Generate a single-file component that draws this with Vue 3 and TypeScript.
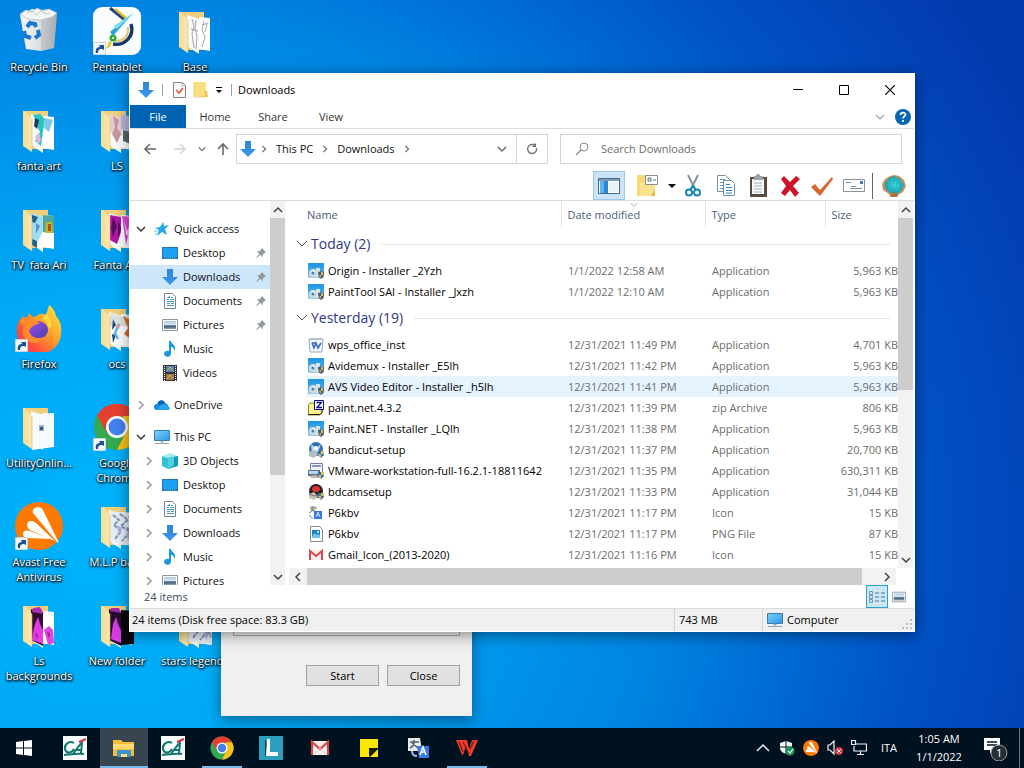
<script setup lang="ts">
import { ref } from 'vue'

interface DesktopItem { label: string; icon: string; art?: string; shortcut?: boolean }
interface NavItem { label: string; icon: string; pinned?: boolean; active?: boolean; expandable?: boolean }
interface NavSection { label: string; icon: string; open: boolean; items: NavItem[] }
interface FileItem { name: string; icon: string; date: string; type: string; size: string; hover?: boolean }
interface FileGroup { label: string; files: FileItem[] }
interface TaskItem { label: string; icon: string; state?: string }

const desktopColumns: DesktopItem[][] = [
  [
    { label: 'Recycle Bin', icon: 'bin' },
    { label: 'fanta art', icon: 'folder', art: 'art-teal' },
    { label: 'TV  fata Ari', icon: 'folder', art: 'art-tv' },
    { label: 'Firefox', icon: 'firefox', shortcut: true },
    { label: 'UtilityOnlin...', icon: 'folder', art: 'art-blank' },
    { label: 'Avast Free Antivirus', icon: 'avast', shortcut: true },
    { label: 'Ls backgrounds', icon: 'folder', art: 'art-magenta' },
  ],
  [
    { label: 'Pentablet', icon: 'pen', shortcut: true },
    { label: 'LS', icon: 'folder', art: 'art-ls' },
    { label: 'Fanta Art', icon: 'folder', art: 'art-pink' },
    { label: 'ocs', icon: 'folder', art: 'art-ocs' },
    { label: 'Google Chrome', icon: 'chrome', shortcut: true },
    { label: 'M.L.P base', icon: 'folder', art: 'art-mlp' },
    { label: 'New folder', icon: 'folder', art: 'art-dark' },
  ],
  [
    { label: 'Base', icon: 'folder', art: 'art-base' },
    { label: 'stars legends', icon: 'folder', art: 'art-mlp' },
  ],
]

const sections: NavSection[] = [
  {
    label: 'Quick access', icon: 'star', open: true, items: [
      { label: 'Desktop', icon: 'desktop', pinned: true },
      { label: 'Downloads', icon: 'down', pinned: true, active: true },
      { label: 'Documents', icon: 'doc', pinned: true },
      { label: 'Pictures', icon: 'picture', pinned: true },
      { label: 'Music', icon: 'music' },
      { label: 'Videos', icon: 'video' },
    ],
  },
  { label: 'OneDrive', icon: 'cloud', open: false, items: [] },
  {
    label: 'This PC', icon: 'pc', open: true, items: [
      { label: '3D Objects', icon: 'cube', expandable: true },
      { label: 'Desktop', icon: 'desktop', expandable: true },
      { label: 'Documents', icon: 'doc', expandable: true },
      { label: 'Downloads', icon: 'down', expandable: true },
      { label: 'Music', icon: 'music', expandable: true },
      { label: 'Pictures', icon: 'picture', expandable: true },
    ],
  },
]

const groups: FileGroup[] = [
  {
    label: 'Today (2)', files: [
      { name: 'Origin - Installer _2Yzh', icon: 'installer', date: '1/1/2022 12:58 AM', type: 'Application', size: '5,963 KB' },
      { name: 'PaintTool SAI - Installer _Jxzh', icon: 'installer', date: '1/1/2022 12:10 AM', type: 'Application', size: '5,963 KB' },
    ],
  },
  {
    label: 'Yesterday (19)', files: [
      { name: 'wps_office_inst', icon: 'wpsdoc', date: '12/31/2021 11:49 PM', type: 'Application', size: '4,701 KB' },
      { name: 'Avidemux - Installer _E5lh', icon: 'installer', date: '12/31/2021 11:42 PM', type: 'Application', size: '5,963 KB' },
      { name: 'AVS Video Editor - Installer _h5lh', icon: 'installer', date: '12/31/2021 11:41 PM', type: 'Application', size: '5,963 KB', hover: true },
      { name: 'paint.net.4.3.2', icon: 'zip', date: '12/31/2021 11:39 PM', type: 'zip Archive', size: '806 KB' },
      { name: 'Paint.NET - Installer _LQlh', icon: 'installer', date: '12/31/2021 11:38 PM', type: 'Application', size: '5,963 KB' },
      { name: 'bandicut-setup', icon: 'bandicut', date: '12/31/2021 11:37 PM', type: 'Application', size: '20,700 KB' },
      { name: 'VMware-workstation-full-16.2.1-18811642', icon: 'vmware', date: '12/31/2021 11:35 PM', type: 'Application', size: '630,311 KB' },
      { name: 'bdcamsetup', icon: 'bdcam', date: '12/31/2021 11:33 PM', type: 'Application', size: '31,044 KB' },
      { name: 'P6kbv', icon: 'translate-small', date: '12/31/2021 11:17 PM', type: 'Icon', size: '15 KB' },
      { name: 'P6kbv', icon: 'png', date: '12/31/2021 11:17 PM', type: 'PNG File', size: '87 KB' },
      { name: 'Gmail_Icon_(2013-2020)', icon: 'gmail-small', date: '12/31/2021 11:16 PM', type: 'Icon', size: '15 KB' },
    ],
  },
]

const tools = [
  { label: 'Copy', icon: 'copy' },
  { label: 'Paste', icon: 'paste' },
  { label: 'Delete', icon: 'cross' },
  { label: 'Properties', icon: 'check' },
  { label: 'Send', icon: 'mail' },
]

const tasks: TaskItem[] = [
  { label: 'CA', icon: 'ca' },
  { label: 'File Explorer', icon: 'explorer', state: 'active' },
  { label: 'CA', icon: 'ca' },
  { label: 'Google Chrome', icon: 'chrome', state: 'running' },
  { label: 'L', icon: 'letter' },
  { label: 'Gmail', icon: 'gmail' },
  { label: 'Sticky Notes', icon: 'note' },
  { label: 'Translate', icon: 'translate' },
  { label: 'WPS Office', icon: 'wps', state: 'running' },
]

const tray = [
  { label: 'Show hidden icons', icon: 'caret' },
  { label: 'Security', icon: 'shield' },
  { label: 'Avast', icon: 'avast' },
  { label: 'Volume', icon: 'sound' },
  { label: 'Network', icon: 'network' },
]

const query = ref('')
</script>

<template>
  <div class="screen">
    <svg class="sprite" aria-hidden="true">
      <defs>
        <linearGradient id="g-bin" x1="0" x2="1" y1="0" y2="0"><stop offset="0" stop-color="#f4f5f6" /><stop offset=".65" stop-color="#d8dbde" /><stop offset="1" stop-color="#a3a8ad" /></linearGradient>
        <linearGradient id="g-fold" x1="0" x2="1" y1="0" y2="0"><stop offset="0" stop-color="#f6dc92" /><stop offset="1" stop-color="#fbe9b4" /></linearGradient>
        <linearGradient id="g-fox" x1="1" x2="0" y1="0" y2="1"><stop offset="0" stop-color="#fff04a" /><stop offset=".4" stop-color="#ffa329" /><stop offset=".75" stop-color="#ff4a3f" /><stop offset="1" stop-color="#e22b7c" /></linearGradient>
        <linearGradient id="g-violet" x1="0" x2="1" y1="0" y2="1"><stop offset="0" stop-color="#9a50e8" /><stop offset="1" stop-color="#4a3fb5" /></linearGradient>
        <linearGradient id="g-arrow" x1="0" x2="0" y1="0" y2="1"><stop offset="0" stop-color="#2f86d6" /><stop offset="1" stop-color="#3b97ea" /></linearGradient>
        <linearGradient id="g-scene" x1="0" x2="0" y1="0" y2="1"><stop offset="0" stop-color="#a9cbe4" /><stop offset=".5" stop-color="#dfeaf2" /><stop offset=".6" stop-color="#35536e" /><stop offset="1" stop-color="#8fa5b8" /></linearGradient>
        <linearGradient id="g-screen" x1="0" x2="1" y1="0" y2="1"><stop offset="0" stop-color="#7cd0fb" /><stop offset="1" stop-color="#2b98e6" /></linearGradient>
        <linearGradient id="g-sky" x1="0" x2="0" y1="0" y2="1"><stop offset="0" stop-color="#1d97e4" /><stop offset=".5" stop-color="#3fa6e0" /><stop offset="1" stop-color="#a9cfe4" /></linearGradient>
        <radialGradient id="g-shell"><stop offset="0" stop-color="#3fe0e6" /><stop offset="1" stop-color="#1c9fae" /></radialGradient>
      </defs>

      <symbol id="i-bin" viewBox="0 0 48 48">
        <path d="M5 8 17 2l9 1 8-1 8 5-3 34-13 3-15-2z" fill="url(#g-bin)" />
        <path d="M26 11 42 7l-3 34-13 3z" fill="#a9afb5" opacity=".5" />
        <path d="m5 7 6-4 6 2 5-4 6 3 6-2 8 4-5 4-11 3-13-1z" fill="#f3f4f5" stroke="#b4b9bd" stroke-width=".7" />
        <path d="m12 6 5-2 4 4 5-4 5 3 4-1" fill="none" stroke="#c6cacd" />
        <path d="m12 20 3-4 5 1 1 3M23 23l1 5-4 3M16 31l-6-2-1-5" fill="none" stroke="#1679cf" stroke-width="4" />
      </symbol>
      <symbol id="i-folder" viewBox="0 0 48 48">
        <path d="M8 5h25v38H16z" fill="#efcf7e" />
        <path d="m28 10 11 1v33l-11-2z" fill="#fff" /><path d="m16 8 12 4v35l-12-8z" fill="#f8fafc" />
      </symbol>
      <symbol id="i-flap" viewBox="0 0 48 48"><path d="M8 5h2l7 8v33L8 40z" fill="url(#g-fold)" /><path d="M17 13v33" stroke="#d9b45e" stroke-width=".6" /></symbol>
      <symbol id="i-art-teal" viewBox="0 0 48 48">
        <path d="m18 9 7-1 5 5-2 12-2 15-6-5 5-9-3-6-1-6z" fill="#27c4c2" /><path d="m20 12 4 2-2 9-3-3z" fill="#203a55" /><path d="m30 12 8 2-4 12-5-4z" fill="#7fc7e8" /><path d="m20 31 4-5 2 8-3 5z" fill="#e8b8d4" />
      </symbol>
      <symbol id="i-art-tv" viewBox="0 0 48 48">
        <path d="m16 8 12 4v14l-5 10-7 4z" fill="#9fdcf4" /><path d="m28 10 11 1v17l-11-1z" fill="#4fa6a1" /><path d="M31 17h6l1 11h-8z" fill="#c9b32b" /><path d="M33 19h3v7h-3z" fill="#b44c24" /><path d="m17 10 6 2-3 6-3-1zM17 34l5 2v7l-5-3z" fill="#1c6091" /><path d="m21 18 4 3-4 8z" fill="#5b8fd4" />
      </symbol>
      <symbol id="i-art-blank" viewBox="0 0 48 48">
        <path d="m15 12 24-2v34l-22 3z" fill="#f7fafd" /><path d="M24 22h5v6h-5z" fill="#9fb2c4" /><path d="M25 24h3v3h-3z" fill="#2c5e8d" />
      </symbol>
      <symbol id="i-art-magenta" viewBox="0 0 48 48">
        <path d="m16 8 12 3v34l-12-6z" fill="#300c37" /><path d="m18 7 7-1 4 7-12-2z" fill="#ad2eb3" /><path d="m20 23 3-7 2 7 3 6 0 14-11-4 1-8z" fill="#e03be4" /><path d="m29 29 5-4 4 4 1 13-6 2-2-8z" fill="#df46df" /><path d="m32 31 3 1-1 6zM20 31l3 3-1 5z" fill="#a018a4" />
      </symbol>
      <symbol id="i-art-dark" viewBox="0 0 48 48">
        <path d="m28 9 13 1v33l-13 1z" fill="#09060d" /><path d="m16 8 12 3v34l-12-6z" fill="#250a31" /><path d="m18 7 8 0 2 5-11-2z" fill="#a02bab" /><path d="m20 23 3-7 2 7 3 6 0 13-10-4 1-8z" fill="#d83ce0" />
      </symbol>
      <symbol id="i-art-ls" viewBox="0 0 48 48">
        <path d="m16 8 13 4 0 18-13-4z" fill="#e6cfd2" /><path d="m20 10 6 4-2 8 4 6-4 9-5-9 3-7z" fill="#c7969c" /><path d="m28 9 18 2v17l-18-5z" fill="#b9b7dc" /><path d="m30 24 16 4v13l-16-6z" fill="#5b646b" />
      </symbol>
      <symbol id="i-art-pink" viewBox="0 0 48 48">
        <path d="m17 10 11 2v15l-4 12-7-4z" fill="#b216ac" /><path d="m20 12 4 9-4 11-2-9zM25 15l3 8-3 12z" fill="#54105e" /><path d="m29 11 12 1v28l-5-13-3 13z" fill="#e046da" /><path d="m31 15 3 11 4-9 2 20-7-8z" fill="#fad1f8" />
      </symbol>
      <symbol id="i-art-ocs" viewBox="0 0 48 48">
        <path d="m17 9 11 4 11-3v12H17z" fill="#dbe3e1" /><path d="m20 15 3 6-4 5zM19 30l4 1-3 8z" fill="#284a7b" /><path d="m26 20-4 9 3 6" fill="none" stroke="#60b9e8" stroke-width="2.500" /><path d="m30 12 9 5v19l-8-6 4-6z" fill="#d56a2a" /><path d="m23 22 4-2-1 5z" fill="#ef8aa3" />
      </symbol>
      <symbol id="i-art-mlp" viewBox="0 0 48 48">
        <path d="m17 9 24 3v32l-24-4z" fill="#e8eef4" /><path d="m20 13 6 5-5 5 7 6-6 8M27 12l8 6-7 6 9 6-8 9M36 14l4 8-5 4 5 10" fill="none" stroke="#7f95bd" stroke-width="2" stroke-dasharray="4 1" /><path d="m24 23 5 3-3 7zM33 30l5 2-3 7z" fill="#a7b6de" />
      </symbol>
      <symbol id="i-art-base" viewBox="0 0 48 48">
        <path d="m21 12 2 7-2 8 2 14M25 13l-1 9 2 7-1 13M20 22l7 2M33 14l-2 9 3 7-3 10M36 17l-2 8M31 18l6-2" fill="none" stroke="#8c9194" stroke-width=".8" />
      </symbol>
      <symbol id="i-shortcut" viewBox="0 0 13 13"><path d="M0 0h13v13H0z" fill="#f5f8fb" stroke="#9bb1c4" /><path d="M3 11c-1-4 1-6 4-6L6 3h5v5L9 7c-3 0-4 1-4 4z" fill="#234f93" /></symbol>
      <symbol id="i-firefox" viewBox="0 0 48 48">
        <path d="M8 12c1 1 3 2 4 2l2-5c2 2 3 4 6 4 5-4 7-4 10-2l2-3c1-3 1-4 2-7 4 3 6 6 7 11 4 4 6 10 5 17a22 21 0 0 1-44 0c-1-8 2-12 6-17z" fill="url(#g-fox)" />
        <ellipse cx="23" cy="26" rx="10" ry="9" fill="url(#g-violet)" />
        <path d="M4 17c5-5 10-4 15-1l6 3c-5 2-9 3-11 8 2 7 9 9 17 5-4 9-17 9-22 1-2-4-2-8 1-11-3-2-4-3-6-5z" fill="#ff8b2b" /><path d="M31 10c4 4 6 8 5 14l-3-1c0-4-2-6-5-8z" fill="#ffd83b" />
      </symbol>
      <symbol id="i-avast" viewBox="0 0 48 48">
        <circle cx="24" cy="24" r="24" fill="#ff7800" /><path d="M18 11c-2-5 7-9 10-3l15 31c1 2 0 2-1 1zM12 23c0-5 6-5 9-2l19 18-23-10c-3-1-5-3-5-6zM8 32c0-4 4-4 7-3l21 8-23-1c-3 0-5-1-5-4z" fill="#fff" />
      </symbol>
      <symbol id="i-pen" viewBox="0 0 48 48">
        <rect width="48" height="48" rx="9" fill="#fafdfc" /><path d="M17 1 32 13" stroke="#20457c" stroke-width="3" /><path d="m22 2 11 9" stroke="#e0be3b" stroke-width="2.500" /><path d="M38 17c4 13-7 22-18 20" fill="none" stroke="#14386e" stroke-width="3.500" /><path d="M35 20c1 9-5 15-13 14" fill="none" stroke="#e2ca7d" stroke-width="2.500" /><path d="m40 6-20 23-3-4z" fill="#23a2de" /><path d="m40 6-16 16-3-3z" fill="#78dff1" /><circle cx="20" cy="31" r="3.500" fill="#31a63a" /><circle cx="20" cy="31" r="1" fill="#fff" /><path d="m16 34-2 6-4 3 7-3 2-5z" fill="#ecc42b" />
      </symbol>
      <symbol id="i-chrome" viewBox="0 0 48 48">
        <circle cx="24" cy="24" r="23" fill="#35a852" /><path d="M4 12.500A23 23 0 0 1 44 12.500L24 14 14 30z" fill="#e5402f" /><path d="M44 12.500A23 23 0 0 1 24 47l9-18-3-16z" fill="#fbc116" /><circle cx="24" cy="24" r="11" fill="#fff" /><circle cx="24" cy="24" r="8.500" fill="#4480ef" />
      </symbol>

      <symbol id="i-down" viewBox="0 0 16 16"><path d="M5 0h6v8h5l-8 8-8-8h5z" fill="url(#g-arrow)" /></symbol>
      <symbol id="i-star" viewBox="0 0 16 16"><path d="m9 1 1 4 5-1-4 4 2 6-5-3-5 4 2-6-4-2 5-1z" fill="#28a8e8" /><path d="M0 10h4M1 13h3" stroke="#7bc8ef" /></symbol>
      <symbol id="i-desktop" viewBox="0 0 16 16"><path d="M0 2h16v12H0z" fill="#1679c2" /><path d="M1 3h14v9H1z" fill="#1ea1f2" /><path d="M2 13h12" stroke="#7ec6f3" stroke-dasharray="1 1" /></symbol>
      <symbol id="i-doc" viewBox="0 0 16 16"><path d="M2.500.5h8l3 3v12h-11z" fill="#fff" stroke="#75848f" /><path d="M9 4.500h2M5 6.500h2m1 0h4M5 8.500h7M5 10.500h3m1 0h3M5 12.500h7" stroke="#4a9bb8" /><path d="m5 5 3-2v2z" fill="#2e6e92" /></symbol>
      <symbol id="i-picture" viewBox="0 0 16 16"><path d="M.5 2.500h15v11H.5z" fill="#fff" stroke="#8b959c" /><path d="M2 4h12v8H2z" fill="url(#g-scene)" /></symbol>
      <symbol id="i-music" viewBox="0 0 16 16"><path d="M7 0h2c0 3 5 4 4 8l-1 2c0-3-1-4-3-4v7a3.500 3 0 1 1-2-3z" fill="#1d98df" /></symbol>
      <symbol id="i-video" viewBox="0 0 16 16"><path d="M1 0h14v16H1z" fill="#33343a" /><path d="M4 1h8v6H4z" fill="#5584b5" /><path d="M4 9h8v6H4z" fill="#a3784d" /><path d="m5 6 3-4 3 4M5 14l3-4 3 3" stroke="#dfb642" fill="none" /><path d="M2.500 1v15M13.500 1v15" stroke="#fff" stroke-dasharray="1 1" /></symbol>
      <symbol id="i-cloud" viewBox="0 0 16 16"><path d="M3 13a3 3 0 0 1 0-6c1-4 6-5 8-1a4 4 0 0 1 2 7z" fill="#1389df" /><path d="M4 6c2-4 6-3 7 0l-5 4z" fill="#0862b7" /><path d="M5 9c4-3 8-2 11 2 0 1-1 2-2 2H3z" fill="#28a6ee" /></symbol>
      <symbol id="i-pc" viewBox="0 0 16 16"><path d="M.5 1.500h15v10H.5z" fill="url(#g-screen)" stroke="#3a7eaf" /><path d="M7 12h2v1H7zM1 14.500h14" stroke="#8fa2b0" fill="#8fa2b0" /></symbol>
      <symbol id="i-cube" viewBox="0 0 16 16"><path d="m0 3 8-3 8 3-6 3z" fill="#a8ebf0" /><path d="m0 3 6 2v11l-6-3z" fill="#35c0d4" /><path d="m6 5 10-2v10L6 16z" fill="#139cb8" /><path d="m6 5 6-1v8l-6 4z" fill="#4ed1dd" /></symbol>
      <symbol id="i-pin" viewBox="0 0 12 12"><path d="m7 0 5 5-2 1-2 2v3L5 8l-4 4-1 0 4-5-3-3h3l2-2z" fill="#90999f" /></symbol>

      <symbol id="i-installer" viewBox="0 0 16 16"><path d="M0 0h16v15H0z" fill="url(#g-sky)" /><path d="M8 5h4v9H7z" fill="#d5e3ea" /><circle cx="5" cy="10" r="4" fill="#cfdbe1" /><circle cx="5" cy="10" r="1.500" fill="#3f86b5" /><path d="m4 7 2 0 1 3z" fill="#fff" /><path d="M10 9c2 0 3-1 3-1s1 1 3 1c0 4-1 6-3 7-2-1-3-3-3-7z" fill="#4c5f70" /><path d="M13 9h2v3h-2zM11 12h2v3z" fill="#d5bb55" /></symbol>
      <symbol id="i-wpsdoc" viewBox="0 0 16 16"><path d="M1 2h14l-1 13H2z" fill="#f4f7fc" stroke="#97a8c8" /><path d="M1 2h14" stroke="#b8bec9" stroke-width="2" /><path d="m4 6 2 5 2-5 2 5 3-5M4 6h4" stroke="#3567cb" fill="none" stroke-width="1.500" /></symbol>
      <symbol id="i-zip" viewBox="0 0 16 16"><path d="M.5 4.500 2 3h5v2h7v8l-2 2H.5z" fill="#fff492" stroke="#8b8115" /><path d="M6.500.5h9v9h-9z" fill="#fff" stroke="#10108c" /><path d="M8.500 2.500h5L9 7.500h5" fill="none" stroke="#10108c" stroke-width="1.300" /><path d="M0 14.500h12l2-2V10" stroke="#222" fill="none" /></symbol>
      <symbol id="i-bandicut" viewBox="0 0 16 16"><circle cx="8" cy="7" r="7" fill="#376fba" /><path d="m3 2 5 4 5-4-3 8-6 2z" fill="#b9d8f1" /><circle cx="8" cy="6" r="2" fill="#fff" /><path d="m1 10 5-2 4 4-4 4-5-2z" fill="#b3bdc4" /><path d="M10 9h6v4l-3 3-3-3z" fill="#356fac" /><path d="M13 9h3v3h-3zM10 12h3v4z" fill="#dcc45a" /></symbol>
      <symbol id="i-vmware" viewBox="0 0 16 16"><path d="M2.500.5h12v13h-12z" fill="#f0f2f7" stroke="#727c9c" /><path d="M4 2h9v2H4z" fill="#8798c8" /><path d="M0 7h12v6H0z" fill="#647281" /><path d="M1 8h9v3H1z" fill="#acd9f4" /><path d="m1 13 7-1 3 3H4z" fill="#bcb8ab" /><path d="M10 9h6v4l-3 3-3-3z" fill="#356fac" /><path d="M13 9h3v3h-3zM10 12h3v4z" fill="#dcc45a" /></symbol>
      <symbol id="i-bdcam" viewBox="0 0 16 16"><circle cx="8" cy="7" r="7" fill="#271e20" /><ellipse cx="8" cy="5" rx="4" ry="3" fill="#e13134" /><path d="m1 10 5-2 4 4-4 4-5-2z" fill="#c3c1ba" /><path d="m1 10 5 2 4-1" stroke="#756e67" fill="none" /><path d="M10 9h6v4l-3 3-3-3z" fill="#446e9a" /><path d="M13 9h3v3h-3zM10 12h3v4z" fill="#d5be66" /></symbol>
      <symbol id="i-translate-small" viewBox="0 0 16 16"><path d="M2 1h6v6H2z" fill="#d7d9d5" /><path d="M2 3h7M5 1v2c0 3-2 4-4 5m2-4 5 3" stroke="#7c8279" fill="none" /><path d="M6 6h8v8H6z" fill="#3976df" /><path d="m8 12 2-5 2 5m-3-2h2" stroke="#c6dcff" fill="none" /><path d="M2 10c0 2 1 3 3 3" stroke="#5880c8" fill="none" /></symbol>
      <symbol id="i-png" viewBox="0 0 16 16"><path d="M2.500.5h9l3 3v12h-12z" fill="#fff" stroke="#7f8990" /><path d="M4 4h8v8H4z" fill="#1682c7" /><path d="m4 10 3-3 2 2 2-1 1 2v2H4z" fill="#73c2eb" /><circle cx="10" cy="6" r="1" fill="#fff" /></symbol>
      <symbol id="i-gmail-small" viewBox="0 0 16 16"><path d="M1 3h14v10H1z" fill="#f7eeee" /><path d="M2 13V4l6 5 6-5v9" stroke="#db4a50" stroke-width="2" fill="none" /></symbol>

      <symbol id="i-left" viewBox="0 0 14 14"><path d="M13 7H2m5-5L2 7l5 5" fill="none" stroke="currentColor" stroke-width="1.600" /></symbol>
      <symbol id="i-right" viewBox="0 0 14 14"><path d="M1 7h11M7 2l5 5-5 5" fill="none" stroke="currentColor" stroke-width="1.600" /></symbol>
      <symbol id="i-up" viewBox="0 0 14 14"><path d="M7 13V2M2 7l5-5 5 5" fill="none" stroke="currentColor" stroke-width="1.600" /></symbol>
      <symbol id="i-chev-d" viewBox="0 0 10 10"><path d="m1 3 4 4 4-4" fill="none" stroke="currentColor" stroke-width="1.500" /></symbol>
      <symbol id="i-chev-thin" viewBox="0 0 12 12"><path d="m1 3 5 5 5-5" fill="none" stroke="currentColor" stroke-width="1" /></symbol>
      <symbol id="i-chev-u" viewBox="0 0 10 10"><path d="m1 7 4-4 4 4" fill="none" stroke="currentColor" stroke-width="1.500" /></symbol>
      <symbol id="i-chev-r" viewBox="0 0 10 10"><path d="m3 1 4 4-4 4" fill="none" stroke="currentColor" stroke-width="1.500" /></symbol>
      <symbol id="i-chev-l" viewBox="0 0 10 10"><path d="M7 1 3 5l4 4" fill="none" stroke="currentColor" stroke-width="1.500" /></symbol>
      <symbol id="i-min" viewBox="0 0 10 10"><path d="M0 4.500h10" stroke="#000" /></symbol>
      <symbol id="i-max" viewBox="0 0 10 10"><path d="M.5.500h9v9h-9z" stroke="#000" fill="none" /></symbol>
      <symbol id="i-close" viewBox="0 0 10 10"><path d="m0 0 10 10M10 0 0 10" stroke="#000" stroke-width="1.200" /></symbol>
      <symbol id="i-page-check" viewBox="0 0 16 16"><path d="M2.500.5h9l3 3v12h-12z" fill="#fafafa" stroke="#858585" /><path d="M11 1v3h3" fill="none" stroke="#aaa" /><path d="m5 8 3 3 4-5" stroke="#e05a47" stroke-width="1.700" fill="none" /></symbol>
      <symbol id="i-plain-folder" viewBox="0 0 16 16"><path d="M1 0h12v14H1z" fill="#f9df80" /><path d="M12 9h2l1 6H1l11-1z" fill="#e9c558" /><path d="M1 0v15h12" fill="none" stroke="#eed26e" /></symbol>
      <symbol id="i-customize" viewBox="0 0 8 8"><path d="M1 1.500h6" stroke="#000" /><path d="M1 4h6L4 7z" fill="#000" /></symbol>
      <symbol id="i-help" viewBox="0 0 16 16"><circle cx="8" cy="8" r="8" fill="#0865b4" /><path d="M5.500 6c0-3 5-3 5-.5C10.500 7.500 8 7 8 9.500M8 11v2" stroke="#fff" stroke-width="1.700" fill="none" /></symbol>
      <symbol id="i-refresh" viewBox="0 0 14 14"><path d="M11.500 6a4.500 4.500 0 1 1-4-3.500h3" fill="none" stroke="#777" stroke-width="1.400" /><path d="M11 1v4H7z" fill="#777" /></symbol>
      <symbol id="i-search" viewBox="0 0 14 14"><circle cx="9" cy="5" r="4" fill="none" stroke="#8a8a8a" /><path d="m6 8-5 5" stroke="#8a8a8a" stroke-width="1.300" /></symbol>

      <symbol id="i-pane" viewBox="0 0 24 24"><path d="M1.500 4.500h21v15h-21z" fill="#fff" stroke="#466684" /><path d="M2 5h20v2H2z" fill="#7c9db8" /><path d="M3 7h8v12H3z" fill="#2c86d2" /><path d="M3 7h4v12H3z" fill="#5cb5ef" /><path d="M12 8h9v10h-9z" fill="#eaf3fa" /></symbol>
      <symbol id="i-folder-opts" viewBox="0 0 24 24"><path d="M1 1h7l2 3h9v18H1z" fill="#f7d875" /><path d="M4 8h15v14H4z" fill="#fbe38e" /><path d="M9.500 1.500h12v9h-12z" fill="#fff" stroke="#8c8c8c" /><path d="M12 4h3v3h-3zm5 2h3" stroke="#59816d" fill="#d8e9de" /><path d="m15 22 4-7v7z" fill="#deb750" /></symbol>
      <symbol id="i-scissors" viewBox="0 0 24 24"><path d="m7 1 7 14M17 1l-7 14" stroke="#88939a" stroke-width="2" /><circle cx="8" cy="18.500" r="3" fill="none" stroke="#1687b5" stroke-width="2" /><circle cx="16" cy="18.500" r="3" fill="none" stroke="#1687b5" stroke-width="2" /><path d="m9 16 3-4 3 4" fill="none" stroke="#1687b5" stroke-width="2" /></symbol>
      <symbol id="i-copy" viewBox="0 0 24 24"><path d="M3.500 1.500h8l4 4v12h-12z" fill="#fff" stroke="#75919f" /><path d="M6 5.500h5M6 8.500h7M6 11.500h7M6 14.500h7" stroke="#5d9dbb" /><path d="M9.500 6.500h8l3 3v12h-11z" fill="#fff" stroke="#75919f" /><path d="M12 10.500h4M12 13.500h6M12 16.500h6M12 19h6" stroke="#2a86c0" /></symbol>
      <symbol id="i-paste" viewBox="0 0 24 24"><path d="M4 3h17v20H4z" fill="#5c4b3f" /><path d="M6 5h12v15H6z" fill="#f8faf9" /><path d="M8 2h2c0-3 4-3 4 0h3v4H8z" fill="#99a5a9" /><path d="M8 9h8M8 12h8M8 15h8M8 18h8" stroke="#9cafbb" /></symbol>
      <symbol id="i-cross" viewBox="0 0 24 24"><path d="m3 5 3-3 6 6 6-6 4 3-7 7 6 7-4 4-5-7-5 6-4-3 5-7z" fill="#ce1528" /></symbol>
      <symbol id="i-check" viewBox="0 0 24 24"><path d="m1 13 4-3 5 6L22 3l1 2-13 17z" fill="#d9662f" /></symbol>
      <symbol id="i-mail" viewBox="0 0 24 24"><path d="M1.500 5.500h21v12h-21z" fill="#fcfefe" stroke="#8a9298" /><path d="M4 8.500h5M9 12.500h5M8 14.500h12" stroke="#779095" /><path d="M18 7h3v3h-3z" fill="#3f76be" /></symbol>
      <symbol id="i-shell" viewBox="0 0 24 24"><path d="M7 20 1 16 0 10l3-5 5-3 4-1 5 1 5 4 2 6-3 6-5 3-1 2H9z" fill="#c98f58" /><path d="m8 19-5-5v-5l4-5 5-2 6 3 4 6-3 6-4 3z" fill="url(#g-shell)" /><path d="M12 20V3M10 19 4 8M14 19l6-11M11 19 8 4M13 19l3-15" stroke="#22a4ae" stroke-width=".6" /><path d="m8 21 4-3 4 3-1 2H9z" fill="#aa743e" /></symbol>
      <symbol id="i-list" viewBox="0 0 18 14"><path d="M1.500 1.500h3v3h-3zm0 4h3v3h-3zm0 4h3v3h-3z" fill="none" stroke="#7896a8" /><path d="M7 3h10M7 7h10M7 11h10" stroke="#50758b" stroke-dasharray="4 2" /></symbol>
      <symbol id="i-grip" viewBox="0 0 10 10"><path d="M8 0h2v2H8zM4 4h2v2H4zM8 4h2v2H8zM0 8h2v2H0zM4 8h2v2H4zM8 8h2v2H8z" fill="#bebebe" /></symbol>

      <symbol id="i-windows" viewBox="0 0 16 16"><path d="m0 2 7-1v6.500H0zM8 1l8-1v7.500H8zM0 8.500h7V15l-7-1zM8 8.500h8V16l-8-1z" fill="#fff" /></symbol>
      <symbol id="i-ca" viewBox="0 0 24 24"><path d="M0 0h24v24H0z" fill="#f7fbfa" /><path d="M11 7c-5-3-10 2-9 6 1 5 7 4 9 0M10 18 19 6l-1 12M12 14h7M1 19c9-1 14-2 20-1" fill="none" stroke="#13766c" stroke-width="2" /><path d="m16 6 7-3" stroke="#dd3549" stroke-width="2" /></symbol>
      <symbol id="i-explorer" viewBox="0 0 24 24"><path d="M1 4h8l2 2h11v14H1z" fill="#f8bb39" /><path d="M1 8h21v5H1z" fill="#ffda70" /><path d="M5 14h14v7h-4v-3H9v3H5z" fill="#3b95c8" /><path d="M9 18h6v3H9z" fill="#ffdd80" /></symbol>
      <symbol id="i-letter" viewBox="0 0 24 24"><path d="M0 0h24v24H0z" fill="#2c9fc1" /><path d="M6 3v17h4l1-7z" fill="#0e3f68" /><path d="M8 3h3v13h8v4H7z" fill="#fff" /></symbol>
      <symbol id="i-gmail" viewBox="0 0 24 24"><path d="M3 5h18v14H3z" fill="#f1eeec" /><path d="M4 19V6l8 7 8-7v13" stroke="#d5484d" stroke-width="2.200" fill="none" /><path d="m6 18 6-6 6 6" fill="none" stroke="#d6d2d0" /></symbol>
      <symbol id="i-note" viewBox="0 0 24 24"><path d="M3 3h18v9h-8v9H3z" fill="#ffe800" /><path d="M12 21v-9h9z" fill="#1d1c17" /><path d="M13 21h8v-8z" fill="#ffe800" /></symbol>
      <symbol id="i-translate" viewBox="0 0 24 24"><path d="M2 2h12l2 13H2z" fill="#e8ecec" /><path d="M4 6h9M8 4v2c0 3-2 5-4 6m2-5 6 5" stroke="#566366" stroke-width="1.500" fill="none" /><path d="M11 10h12v12H13z" fill="#3978e2" /><path d="m14 19 3-8 3 8m-5-3h4" stroke="#fff" stroke-width="1.500" fill="none" /><path d="M6 15c0 4 2 5 5 5" stroke="#92b7f4" stroke-width="2" fill="none" /></symbol>
      <symbol id="i-wps" viewBox="0 0 24 24"><path d="M1 4h11l2 9 3-9h6l-7 16h-2L11 10l-3 9H7z" fill="#ee3e2d" /><path d="m4 6 4 10M8 6l6 12M15 13l4-8" stroke="#7d1a15" stroke-width="1.300" /></symbol>
      <symbol id="i-caret" viewBox="0 0 16 16"><path d="m2 11 6-6 6 6" fill="none" stroke="#e8edf0" stroke-width="1.500" /></symbol>
      <symbol id="i-shield" viewBox="0 0 16 16"><path d="m1 3 6-2 6 2v5c0 3-3 5-6 6-3-1-6-3-6-6z" fill="#f4f7f7" /><path d="M7 0v14M1 7h12" stroke="#001322" /><circle cx="11" cy="11" r="4.500" fill="#159957" /><path d="m9 11 2 2 3-4" fill="none" stroke="#fff" stroke-width="1.200" /></symbol>
      <symbol id="i-sound" viewBox="0 0 16 16"><path d="M1 5h2l4-4v13l-4-4H1z" fill="none" stroke="#f2f4f5" stroke-width="1.200" /><circle cx="12" cy="11" r="4" fill="#d93440" /><path d="m10 9 4 4m0-4-4 4" stroke="#fff" /></symbol>
      <symbol id="i-network" viewBox="0 0 16 16"><path d="M4 4h11.500v7H3V6M6 14.500h7M9.500 11v3M.5.500h4v4h-4z" fill="none" stroke="#edf2f5" stroke-width="1.200" /></symbol>
      <symbol id="i-notify" viewBox="0 0 26 26"><path d="M2 3h16v12h-7l-3 4v-4H2z" fill="#fff" /><path d="M5 7h10M5 10h10" stroke="#001322" stroke-width="1.500" /><circle cx="17" cy="18" r="8" fill="#252f35" stroke="#8f989e" /></symbol>
    </svg>

    <main class="desktop">
      <div v-for="(col, c) in desktopColumns" :key="c" class="icon-column">
        <button v-for="item in col" :key="item.label" class="shortcut" type="button">
          <span class="big-icon">
            <svg><use :href="'#i-' + item.icon" /></svg>
            <svg v-if="item.art" class="overlay"><use :href="'#i-' + item.art" /></svg>
            <svg v-if="item.art" class="overlay"><use href="#i-flap" /></svg>
            <svg v-if="item.shortcut" class="link-badge"><use href="#i-shortcut" /></svg>
          </span>
          <span class="caption">{{ item.label }}</span>
        </button>
      </div>

      <section class="dialog" aria-label="Setup">
        <div class="dialog-panel"></div>
        <div class="dialog-actions">
          <button type="button">Start</button>
          <button type="button">Close</button>
        </div>
      </section>

      <section class="window" aria-label="Downloads">
        <header class="titlebar">
          <svg class="s16"><use href="#i-down" /></svg>
          <span class="bar"></span>
          <button type="button" aria-label="Properties"><svg class="s16"><use href="#i-page-check" /></svg></button>
          <button type="button" aria-label="New folder"><svg class="s16"><use href="#i-plain-folder" /></svg></button>
          <button type="button" aria-label="Customize toolbar" class="customize"><svg class="s8"><use href="#i-customize" /></svg></button>
          <span class="bar"></span>
          <span class="title">Downloads</span>
          <div class="window-buttons">
            <button type="button" aria-label="Minimize"><svg class="s10"><use href="#i-min" /></svg></button>
            <button type="button" aria-label="Maximize"><svg class="s10"><use href="#i-max" /></svg></button>
            <button type="button" aria-label="Close window"><svg class="s10"><use href="#i-close" /></svg></button>
          </div>
        </header>

        <nav class="ribbon" aria-label="Ribbon">
          <button type="button" class="file-tab">File</button>
          <button type="button">Home</button>
          <button type="button">Share</button>
          <button type="button">View</button>
          <span class="ribbon-end">
            <button type="button" aria-label="Expand ribbon"><svg class="s10"><use href="#i-chev-d" /></svg></button>
            <button type="button" aria-label="Help"><svg class="s16"><use href="#i-help" /></svg></button>
          </span>
        </nav>

        <div class="address-row">
          <div class="history">
            <button type="button" aria-label="Back"><svg class="s14"><use href="#i-left" /></svg></button>
            <button type="button" aria-label="Forward" class="faint"><svg class="s14"><use href="#i-right" /></svg></button>
            <button type="button" aria-label="Recent" class="recent"><svg class="s8"><use href="#i-chev-d" /></svg></button>
            <button type="button" aria-label="Up" class="up"><svg class="s14"><use href="#i-up" /></svg></button>
          </div>
          <div class="address">
            <svg class="s16"><use href="#i-down" /></svg>
            <svg class="s8 first"><use href="#i-chev-r" /></svg>
            <a href="#">This PC</a>
            <svg class="s8"><use href="#i-chev-r" /></svg>
            <a href="#">Downloads</a>
            <svg class="s8"><use href="#i-chev-r" /></svg>
            <button type="button" aria-label="Previous locations" class="locations"><svg class="s10"><use href="#i-chev-d" /></svg></button>
            <button type="button" aria-label="Refresh" class="refresh"><svg class="s14"><use href="#i-refresh" /></svg></button>
          </div>
          <label class="search">
            <svg class="s14"><use href="#i-search" /></svg>
            <input v-model="query" type="text" placeholder="Search Downloads" aria-label="Search Downloads">
          </label>
        </div>

        <div class="toolbar">
          <button type="button" aria-label="Navigation pane" class="pressed"><svg class="s24"><use href="#i-pane" /></svg></button>
          <button type="button" aria-label="Folder options" class="wide"><svg class="s24"><use href="#i-folder-opts" /></svg><span class="triangle"></span></button>
          <button type="button" aria-label="Cut" class="cut"><svg class="s24"><use href="#i-scissors" /></svg></button>
          <button v-for="t in tools" :key="t.label" type="button" :aria-label="t.label"><svg class="s24"><use :href="'#i-' + t.icon" /></svg></button>
          <span class="tool-bar"></span>
          <button type="button" aria-label="Classic Shell"><svg class="s24"><use href="#i-shell" /></svg></button>
        </div>

        <div class="body">
          <nav class="tree" aria-label="Folders">
            <div v-for="s in sections" :key="s.label" class="tree-section">
              <a href="#" class="node root">
                <svg class="s10" :class="{ open: s.open }"><use :href="s.open ? '#i-chev-d' : '#i-chev-r'" /></svg>
                <svg class="s16"><use :href="'#i-' + s.icon" /></svg>
                <span>{{ s.label }}</span>
              </a>
              <a v-for="n in s.items" :key="n.label" href="#" class="node child" :class="{ active: n.active }">
                <span class="twisty"><svg v-if="n.expandable" class="s10"><use href="#i-chev-r" /></svg></span>
                <svg class="s16"><use :href="'#i-' + n.icon" /></svg>
                <span>{{ n.label }}</span>
                <svg v-if="n.pinned" class="pin"><use href="#i-pin" /></svg>
              </a>
            </div>
          </nav>
          <div class="vscroll tree-scroll">
            <button type="button" aria-label="Scroll folders up"><svg class="s10"><use href="#i-chev-u" /></svg></button>
            <span class="thumb"></span>
            <button type="button" aria-label="Scroll folders down"><svg class="s10"><use href="#i-chev-d" /></svg></button>
          </div>

          <div class="content">
            <div class="list-row">
              <div class="list">
                <table>
                  <colgroup><col><col class="c-date"><col class="c-type"><col class="c-size"></colgroup>
                  <thead>
                    <tr>
                      <th scope="col">Name</th>
                      <th scope="col">Date modified<svg class="sort s8"><use href="#i-chev-thin" /></svg></th>
                      <th scope="col">Type</th>
                      <th scope="col">Size</th>
                    </tr>
                  </thead>
                  <tbody v-for="g in groups" :key="g.label">
                    <tr class="group">
                      <th colspan="4" scope="rowgroup">
                        <div class="group-label"><svg class="s12"><use href="#i-chev-thin" /></svg><span>{{ g.label }}</span><i></i></div>
                      </th>
                    </tr>
                    <tr v-for="(f, i) in g.files" :key="i" class="file" :class="{ hover: f.hover }">
                      <td><span class="file-name"><svg class="s16"><use :href="'#i-' + f.icon" /></svg>{{ f.name }}</span></td>
                      <td>{{ f.date }}</td>
                      <td>{{ f.type }}</td>
                      <td class="size">{{ f.size }}</td>
                    </tr>
                  </tbody>
                </table>
              </div>
              <div class="vscroll list-scroll">
                <button type="button" aria-label="Scroll up"><svg class="s10"><use href="#i-chev-u" /></svg></button>
                <span class="thumb"></span>
                <button type="button" aria-label="Scroll down"><svg class="s10"><use href="#i-chev-d" /></svg></button>
              </div>
            </div>
            <div class="hscroll">
              <button type="button" aria-label="Scroll left"><svg class="s10"><use href="#i-chev-l" /></svg></button>
              <span class="thumb"></span>
              <button type="button" aria-label="Scroll right"><svg class="s10"><use href="#i-chev-r" /></svg></button>
            </div>
          </div>
        </div>

        <div class="summary">
          <span>24 items</span>
          <div class="views">
            <button type="button" aria-label="Details view" class="on"><svg class="list-icon"><use href="#i-list" /></svg></button>
            <button type="button" aria-label="Large icons view"><svg class="s14"><use href="#i-picture" /></svg></button>
          </div>
        </div>

        <footer class="status">
          <span class="free">24 items (Disk free space: 83.3 GB)</span>
          <span class="total">743 MB</span>
          <span class="zone"><svg class="s16"><use href="#i-pc" /></svg>Computer</span>
          <svg class="grip"><use href="#i-grip" /></svg>
        </footer>
      </section>
    </main>

    <footer class="taskbar">
      <button type="button" class="start" aria-label="Start"><svg class="s16"><use href="#i-windows" /></svg></button>
      <button v-for="(t, i) in tasks" :key="i" type="button" class="task" :class="t.state" :aria-label="t.label">
        <svg class="s24"><use :href="'#i-' + t.icon" /></svg>
      </button>
      <div class="tray">
        <button v-for="t in tray" :key="t.label" type="button" :aria-label="t.label"><svg class="s16"><use :href="'#i-' + t.icon" /></svg></button>
        <button type="button" class="lang">ITA</button>
        <button type="button" class="clock"><span>1:05 AM</span><span>1/1/2022</span></button>
        <button type="button" class="notify" aria-label="Notifications"><svg><use href="#i-notify" /></svg><span>1</span></button>
        <span class="peek"></span>
      </div>
    </footer>
  </div>
</template>

<style>
html, body { margin: 0; }
</style>

<style scoped>
* { box-sizing: border-box; }
.screen { height: 100vh; display: flex; flex-direction: column; overflow: hidden; font: 11px/16px "Open Sans", "Noto Sans", sans-serif; color: #000; }
.sprite { position: absolute; width: 0; height: 0; }
button { border: 0; padding: 0; margin: 0; background: none; font: inherit; color: inherit; display: flex; align-items: center; justify-content: center; }
a { color: inherit; text-decoration: none; }
svg { display: block; flex: none; }
.s8 { width: 8px; height: 8px; }
.s10 { width: 10px; height: 10px; }
.s12 { width: 12px; height: 12px; }
.s14 { width: 14px; height: 14px; }
.s16 { width: 16px; height: 16px; }
.s24 { width: 24px; height: 24px; }

.desktop { position: relative; flex: 1; min-height: 0; display: flex; align-items: flex-start; background: radial-gradient(ellipse 100% 130% at 10% 72%, #00b2fb 0%, #00a8f5 25%, #0084e2 55%, #0052c6 80%, #033aae 100%); }
.icon-column { width: 78px; height: 693px; display: flex; flex-direction: column; justify-content: space-between; }
.shortcut { height: 99px; padding-top: 7px; flex-direction: column; justify-content: flex-start; gap: 4px; }
.big-icon { position: relative; width: 48px; height: 48px; }
.big-icon svg { width: 48px; height: 48px; }
.big-icon .overlay { position: absolute; inset: 0; }
.big-icon .link-badge { position: absolute; left: 0; bottom: 0; width: 13px; height: 13px; }
.caption { width: 74px; line-height: 15px; text-align: center; white-space: pre-wrap; color: #fff; text-shadow: 1px 1px 2px #000, 0 1px 3px #000, 0 0 2px #00000088; }

.dialog { position: absolute; left: 221px; bottom: 12px; width: 251px; height: 120px; padding: 0 12px 30px; background: #f0f0f0; box-shadow: 0 4px 14px #00000066; display: flex; flex-direction: column; justify-content: space-between; }
.dialog-panel { height: 40px; border: 1px solid #adadad; }
.dialog-actions { display: flex; justify-content: flex-end; gap: 8px; }
.dialog-actions button { width: 73px; height: 21px; background: #e1e1e1; border: 1px solid #a3a3a3; }

.window { position: absolute; left: 129px; right: 109px; top: 73px; bottom: 96px; display: flex; flex-direction: column; background: #fff; border: 1px solid #ffffff; box-shadow: 0 3px 14px #00000070; }
.titlebar { height: 31px; flex: none; display: flex; align-items: center; padding-left: 8px; }
.bar { width: 1px; height: 12px; margin: 0 8px; background: #a0a0a0; }
.titlebar > button { margin-right: 6px; }
.titlebar > .customize { margin: 0; }
.title { margin-left: -2px; }
.window-buttons { margin-left: auto; padding-right: 1px; align-self: stretch; display: flex; }
.window-buttons button { width: 46px; }

.ribbon { height: 24px; flex: none; display: flex; border-bottom: 1px solid #dcdcdc; color: #333; }
.ribbon button { width: 58px; }
.ribbon .file-tab { width: 56px; background: #0063b1; color: #fff; }
.ribbon-end { margin-left: auto; display: flex; gap: 10px; padding-right: 3px; color: #aaa; }
.ribbon-end button { width: auto; }

.address-row { flex: none; display: flex; padding: 5px 12px 0 8px; height: 42px; }
.history { flex: none; display: flex; width: 98px; height: 30px; color: #6a6a6a; }
.history button { width: 24px; margin-right: 6px; }
.history .faint { color: #d4d4d4; }
.history .recent { width: 8px; margin: 0 5px 0 0; }
.history .up { margin: 0; }
.address { flex: 1 1 312px; height: 30px; border: 1px solid #d5d5d5; display: flex; align-items: center; gap: 8px; padding-left: 3px; color: #6b6b6b; }
.address a { color: #111; }
.address .first { margin-left: -4px; }
.address .locations { margin-left: auto; width: 28px; }
.address .refresh { align-self: stretch; width: 31px; margin-left: -8px; border-left: 1px solid #d5d5d5; }
.search { flex: 1 1 342px; height: 30px; margin-left: 12px; border: 1px solid #d5d5d5; display: flex; align-items: center; gap: 12px; padding-left: 14px; }
.search input { flex: 1; min-width: 0; border: 0; outline: 0; padding: 0; background: none; font: inherit; color: #000; }
.search input::placeholder { color: #6d6d6d; opacity: 1; }

.toolbar { flex: none; height: 30px; display: flex; justify-content: flex-end; padding-right: 4px; border-bottom: 1px solid #dadbdc; }
.toolbar button { width: 32px; height: 29px; }
.toolbar .pressed { background: #cce4f7; border: 1px solid #99c9ef; }
.toolbar .wide { width: 51px; gap: 8px; justify-content: flex-end; }
.toolbar .cut { width: 34px; }
.triangle { border: 4px solid transparent; border-top-color: #000; border-bottom: 0; }
.tool-bar { width: 1px; height: 26px; margin: 2px 5px 0 2px; background: #666; }

.body { flex: 1; min-height: 0; display: flex; }
.tree { width: 140px; flex: none; overflow: hidden; padding-top: 16px; }
.tree-section { margin-bottom: 8px; }
.node { display: flex; align-items: center; height: 24px; white-space: nowrap; }
.node.root { padding-left: 6px; gap: 4px; color: #111; }
.node.root .s10 { margin-right: 4px; color: #999; }
.node.root .s10.open { color: #333; }
.node.child { gap: 5px; padding-left: 14px; color: #111; }
.twisty { width: 13px; color: #999; }
.node.child.active { background: #cde6f9; }
.pin { width: 10px; height: 10px; margin-left: auto; margin-right: 4px; }

.vscroll { width: 15px; flex: none; display: flex; flex-direction: column; background: #f2f2f2; color: #444; }
.vscroll button { height: 17px; width: 15px; flex: none; }
.vscroll button:last-child { margin-top: auto; }
.vscroll .thumb, .hscroll .thumb { background: #cdcdcd; }
.tree-scroll .thumb { height: 67%; }
.list-scroll .thumb { height: 47%; }

.content { flex: 1; min-width: 0; display: flex; flex-direction: column; }
.list-row { flex: 1; min-height: 0; display: flex; }
.list { flex: 1; min-width: 0; overflow: hidden; }
.list-scroll { margin-right: 1px; }
.hscroll { height: 17px; flex: none; display: flex; margin: 0 18px 0 4px; background: #f2f2f2; color: #444; }
.hscroll button { width: 18px; }
.hscroll .thumb { flex: 1; margin-right: 16px; }

table { width: 100%; border-collapse: collapse; table-layout: fixed; }
.c-date { width: 144px; }
.c-type { width: 120px; }
.c-size { width: 73px; }
th, td { padding: 0; text-align: left; font-weight: 400; white-space: nowrap; }
thead th { position: relative; height: 27px; padding-left: 6px; color: #4c607a; border-right: 1px solid #e5e5e5; }
thead th:first-child { padding-left: 22px; }
thead th:last-child { border-right: 0; }
.sort { position: absolute; left: 68px; top: 0; color: #8a8a8a; }
.group th { height: 32px; }
.group-label { display: flex; align-items: center; gap: 3px; padding: 0 8px 0 11px; font-size: 14px; line-height: 20px; color: #2e3a87; }
.group-label svg { color: #555; }
.group-label i { flex: 1; height: 1px; margin-left: 8px; background: #e3e6f0; }
.file { height: 21px; }
.file td { padding-left: 7px; height: 21px; line-height: 16px; color: #6d6d6d; }
.file td:first-child { padding-left: 23px; color: #000; }
.file td.size { text-align: right; padding: 0; }
.file-name { display: flex; align-items: center; gap: 4px; }
.file.hover td { background: #e5f3ff; }
.file.hover td:first-child { background: linear-gradient(90deg, #fff 22px, #e5f3ff 22px); }

.summary { height: 23px; flex: none; display: flex; align-items: center; justify-content: space-between; padding: 0 4px 0 14px; color: #3c4a5e; }
.views { display: flex; }
.views button { width: 22px; height: 23px; }
.views .on { background: #cbe8f6; border: 1px solid #26a0da; }
.list-icon { width: 18px; height: 14px; }

.status { height: 23px; flex: none; display: flex; background: #f0f0f0; border-top: 1px solid #dcdcdc; position: relative; }
.status span { display: flex; align-items: center; gap: 4px; }
.free { flex: 1; padding-left: 2px; }
.total { width: 88px; padding-left: 4px; border-left: 1px solid #d5d5d5; }
.zone { width: 152px; padding-left: 4px; border-left: 1px solid #d5d5d5; }
.grip { position: absolute; right: 2px; bottom: 2px; width: 10px; height: 10px; }

.taskbar { height: 40px; flex: none; display: flex; gap: 1px; background: #001120; color: #fff; }
.start { width: 48px; margin-right: 2px; }
.task { width: 48px; position: relative; }
.task.active { background: #36454f; border-bottom: 2px solid #76b9ed; padding-top: 2px; }
.task.running::after { content: ""; position: absolute; left: 4px; right: 4px; bottom: 0; height: 2px; background: #76b9ed; }
.tray { margin-left: auto; display: flex; }
.tray button { width: 24px; }
.tray .lang { width: 36px; }
.tray .clock { width: 64px; flex-direction: column; line-height: 18px; }
.tray .notify { width: 48px; position: relative; }
.notify svg { width: 26px; height: 26px; }
.notify span { position: absolute; left: 25px; top: 17px; }
.peek { width: 5px; border-left: 1px solid #6c757c; }
</style>
